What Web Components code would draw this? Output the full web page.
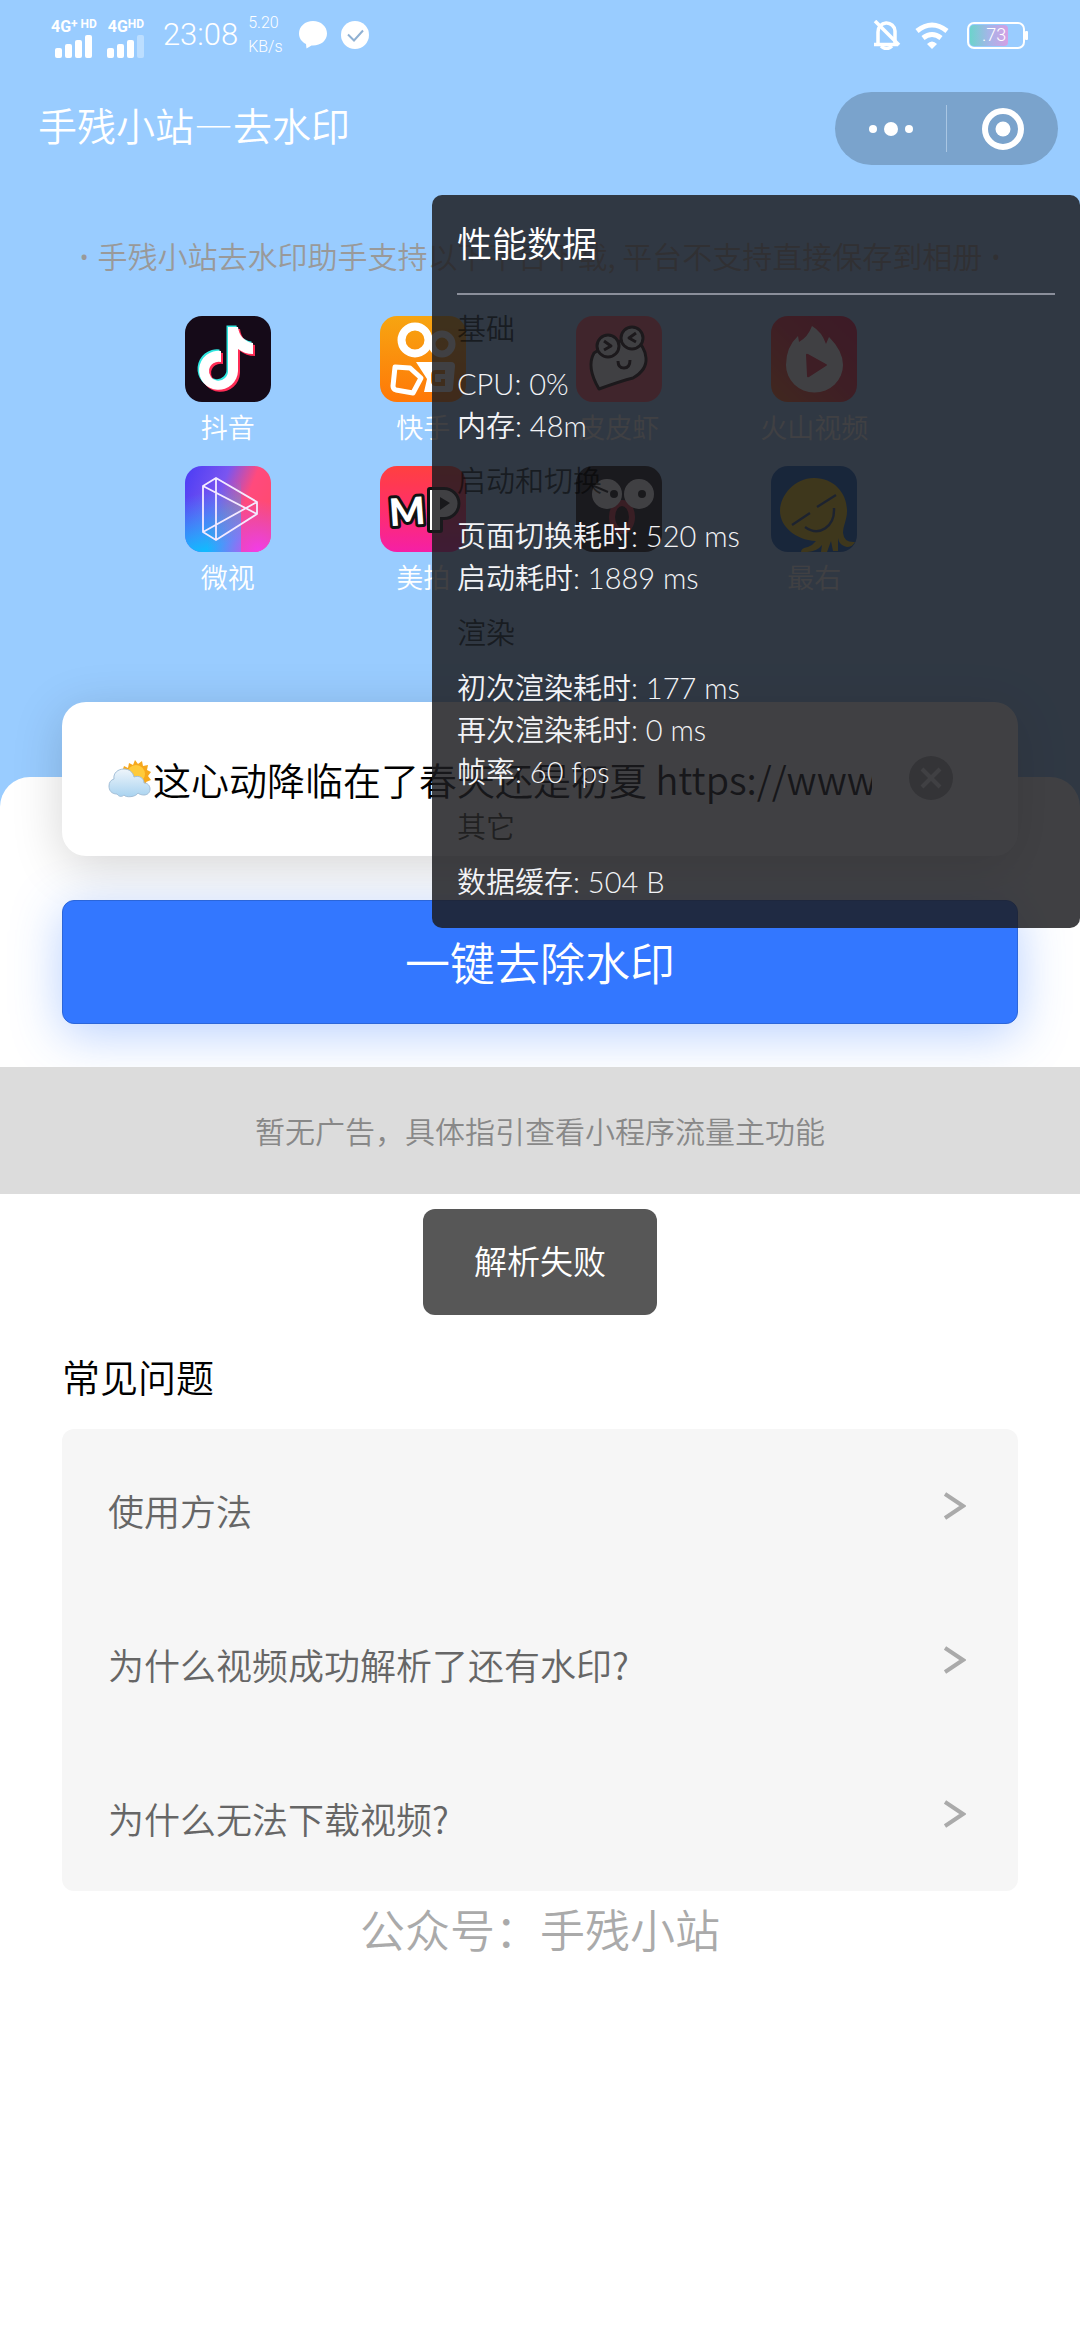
<!DOCTYPE html>
<html lang="zh-CN">
<head>
<meta charset="utf-8">
<meta name="viewport" content="width=device-width, initial-scale=1">
<title>手残小站—去水印</title>
<style>
  html, body { margin: 0; background: #fff; }
  body {
    position: relative;
    min-height: 100vh;
    overflow-x: hidden;
    font-family: "Noto Sans CJK SC", "Noto Sans", sans-serif;
    font-weight: 350;
  }
</style>
</head>
<body>
<watermark-page></watermark-page>

<script>
const define = (name, markup) => {
  const template = document.createElement('template');
  template.innerHTML = markup;
  customElements.define(name, class extends HTMLElement {
    constructor() {
      super();
      this.attachShadow({ mode: 'open' }).append(template.content.cloneNode(true));
    }
  });
};

/* ---------- system status bar ---------- */
define('signal-bars', `
<style>
  :host { display: flex; flex-direction: column; align-items: center; gap: 1px; font: 700 16px/14px Roboto, sans-serif; white-space: nowrap; }
  .label { display: flex; align-items: flex-start; }
  .sup { font-size: 12px; line-height: 9px; }
  svg { display: block; }
  :host([weak]) .last { opacity: .35; }
</style>
<span class="label"><slot></slot><span class="sup"><slot name="sup"></slot></span></span>
<svg width="38" height="23" viewBox="0 0 38 23" fill="#fff" aria-hidden="true">
  <rect x="0" y="13" width="7" height="10" rx="2"/><rect x="10" y="9" width="7" height="14" rx="2"/>
  <rect x="20" y="5" width="7" height="18" rx="2"/><rect class="last" x="30" y="0" width="7" height="23" rx="2"/>
</svg>`);

define('status-bar', `
<style>
  :host { display: flex; align-items: center; height: 70px; padding: 0 51px; color: #fff; box-sizing: border-box; }
  .left, .right { display: flex; align-items: center; }
  .left { flex: 1; gap: 10px; }
  .right { gap: 14px; }
  time { font: 300 31px/36px Roboto, sans-serif; margin-left: 8px; }
  .speed { display: flex; flex-direction: column; font: 300 16px/24px Roboto, sans-serif; }
  .notes { display: flex; gap: 14px; margin-left: 6px; }
  signal-bars { align-self: flex-start; margin-top: 9px; }
  svg { display: block; }
  .battery { font: 300 18px Roboto, sans-serif; margin-left: 4px; }
</style>
<div class="left">
  <signal-bars>4G<span slot="sup">+ HD</span></signal-bars>
  <signal-bars weak>4G<span slot="sup">HD</span></signal-bars>
  <time>23:08</time>
  <div class="speed"><span>5.20</span><span>KB/s</span></div>
  <div class="notes">
    <svg width="28" height="28" viewBox="0 0 28 28" fill="#fff" aria-hidden="true"><path d="M14 0C6 0 0 5.500 0 12.500c0 5 3 8.500 7 10.500l.5 4.500 5-3H14c8 0 14-5 14-12S22 0 14 0z"/></svg>
    <svg width="28" height="28" viewBox="0 0 28 28" aria-hidden="true"><circle cx="14" cy="14" r="14" fill="#fff"/><path d="M7 13.500l6 6 9-10" fill="none" stroke="#8fb0d2" stroke-width="2"/></svg>
  </div>
</div>
<div class="right">
  <svg width="28" height="30" viewBox="0 0 28 30" fill="none" stroke="#fff" stroke-width="3.500" aria-hidden="true">
    <path d="M5 24V12a8.500 8.500 0 0 1 17-1v13"/><path d="M1 24.500h24"/><path d="M8 26q5.500 5 11 0"/><path d="M2 1l24 24"/>
  </svg>
  <svg width="34" height="27" viewBox="0 0 34 27" fill="none" stroke="#fff" stroke-width="5" aria-hidden="true">
    <path d="M2 9Q17-3 32 9"/><path d="M8 16q9-7 18 0"/><path d="M12 22q5-5 10 0l-5 5z" fill="#fff" stroke="none"/>
  </svg>
  <svg class="battery" width="62" height="27" viewBox="0 0 62 27" aria-hidden="true">
    <defs><linearGradient id="charge"><stop offset="0" stop-color="#6cd3cc"/><stop offset=".5" stop-color="#a5b5e8"/><stop offset="1" stop-color="#d59fe4"/></linearGradient></defs>
    <rect x="3" y="3" width="38" height="21" rx="4" fill="url(#charge)"/>
    <rect x="1" y="1" width="56" height="25" rx="6" fill="none" stroke="#fff" stroke-width="2"/>
    <rect x="58" y="9" width="3" height="9" rx="1" fill="#fff"/>
    <text x="15" y="19" fill="#fff">.73</text>
  </svg>
</div>`);

/* ---------- title bar with the capsule menu ---------- */
define('nav-bar', `
<style>
  :host { display: flex; align-items: center; justify-content: space-between; padding: 22px 22px 0 38px; color: #fff; }
  h1 { margin: 0; font-size: 39px; line-height: 60px; font-weight: 350; padding-bottom: 10px; }
  .capsule { display: flex; align-items: center; width: 223px; height: 73px; border-radius: 37px; background: #7aa3cc; }
  button { flex: 1; height: 100%; padding: 0; border: 0; background: none; display: grid; place-items: center; }
  i { width: 1px; height: 47px; background: #a9c6e3; }
</style>
<h1>手残小站—去水印</h1>
<div class="capsule">
  <button aria-label="更多"><svg width="44" height="14" viewBox="0 0 44 14" fill="#fff"><circle cx="4" cy="7" r="4"/><circle cx="22" cy="7" r="7"/><circle cx="40" cy="7" r="4"/></svg></button>
  <i></i>
  <button aria-label="关闭"><svg width="42" height="42" viewBox="0 0 42 42"><circle cx="21" cy="21" r="18" fill="none" stroke="#fff" stroke-width="6"/><circle cx="21" cy="21" r="7.500" fill="#fff"/></svg></button>
</div>`);

/* ---------- supported apps ---------- */
define('app-item', `
<style>
  :host { display: flex; flex-direction: column; align-items: center; gap: 5px; font-size: 27px; line-height: 40px; color: #fff; white-space: nowrap; }
  ::slotted(svg) { display: block; width: 86px; height: 86px; border-radius: 17px; }
</style>
<slot name="icon"></slot><slot></slot>`);

define('app-grid', `
<style>
  :host { display: grid; grid-template-columns: repeat(4, 1fr); row-gap: 19px; padding: 0 168px 0 130px; }
</style>
<app-item><svg slot="icon" viewBox="0 0 86 86"><rect width="86" height="86" fill="#150a18"/>
  <path fill="#2ee6df" transform="translate(-1.500 -1.500)" d="M43 11h10c1 9 7 15 15 16v11c-6 0-11-2-15-5v22a19.500 19.500 0 1 1-17-20v11a9.500 9.500 0 1 0 7 9z"/>
  <path fill="#fe2c55" transform="translate(2 2)" d="M43 11h10c1 9 7 15 15 16v11c-6 0-11-2-15-5v22a19.500 19.500 0 1 1-17-20v11a9.500 9.500 0 1 0 7 9z"/>
  <path fill="#fff" d="M43 11h10c1 9 7 15 15 16v11c-6 0-11-2-15-5v22a19.500 19.500 0 1 1-17-20v11a9.500 9.500 0 1 0 7 9z"/></svg>抖音</app-item>
<app-item><svg slot="icon" viewBox="0 0 86 86"><defs><linearGradient id="ks" x2="0" y2="1"><stop stop-color="#f7a511"/><stop offset="1" stop-color="#ff7808"/></linearGradient></defs><rect width="86" height="86" fill="url(#ks)"/>
  <g fill="none" stroke="#fff"><circle cx="35" cy="24" r="13.500" stroke-width="8"/><circle cx="62" cy="28" r="10" stroke-width="7"/>
  <path d="M15 51l15 1 11 10-8 15-17-3q-3-1-3-4z" stroke-width="5" stroke-linejoin="round"/></g>
  <path fill="#fff" d="M36 46h35q4 0 4 4l-2 22q0 4-4 4H44l3-13z"/><path d="M65 56h-9q-3 0-3 3v6q0 3 3 3h7v-5" fill="none" stroke="#f58a10" stroke-width="4"/></svg>快手</app-item>
<app-item><svg slot="icon" viewBox="0 0 86 86"><rect width="86" height="86" fill="#ff5a70"/>
  <g stroke="#20100f" stroke-width="3" fill="#fff" stroke-linejoin="round"><path d="M18 37q-8 14 5 36 22-8 34-11 14-8 13-20-1-12-12-20L32 28z"/><circle cx="32" cy="30" r="11"/><circle cx="56" cy="22" r="11"/>
  <path fill="none" d="M28 25l7 5-7 4M60 17l-7 5 7 4M42 45q0 7 6 7t6-8"/></g></svg>皮皮虾</app-item>
<app-item><svg slot="icon" viewBox="0 0 86 86"><defs><linearGradient id="hs" x1="0" y1="1" x2="1" y2="0"><stop stop-color="#ff6a22"/><stop offset=".5" stop-color="#f23045"/><stop offset="1" stop-color="#e5154f"/></linearGradient></defs><rect width="86" height="86" fill="url(#hs)"/>
  <path fill="#fff" d="M41 10q10 6 14 18l3-7q14 14 14 28a28 27 0 0 1-57 0q0-18 12-29l1 6q9-5 13-16z"/><path fill="#ee2c45" d="M35 39q0-2 2-1l18 10q2 1 0 2L38 61q-2 1-2-1z"/></svg>火山视频</app-item>
<app-item><svg slot="icon" viewBox="0 0 86 86"><defs><linearGradient id="w1" y2=".4"><stop stop-color="#4a3cf5"/><stop offset=".45" stop-color="#7a55f0"/><stop offset=".75" stop-color="#ff4a7d"/><stop offset="1" stop-color="#ff4a72"/></linearGradient><linearGradient id="w2" x2=".2" y2="1"><stop offset=".35" stop-color="#20b4ff" stop-opacity="0"/><stop offset="1" stop-color="#12b8ff"/></linearGradient><radialGradient id="w3" cx=".85" cy="1" r=".6"><stop stop-color="#f43bea"/><stop offset="1" stop-color="#c84df0" stop-opacity="0"/></radialGradient></defs>
  <rect width="86" height="86" fill="url(#w1)"/><rect width="56" height="86" fill="url(#w2)"/><rect width="86" height="86" fill="url(#w3)"/>
  <path d="M18 20l13-8 41 24v12L31 74l-13-8zM31 12v62M18 20l54 28M18 66l54-30" fill="none" stroke="#f4eaff" stroke-width="1.800" stroke-linejoin="round"/></svg>微视</app-item>
<app-item><svg slot="icon" viewBox="0 0 86 86"><defs><linearGradient id="mp" x2="0" y2="1"><stop stop-color="#ff4040"/><stop offset=".5" stop-color="#ff2f6a"/><stop offset="1" stop-color="#f51fa6"/></linearGradient></defs><rect width="86" height="86" fill="url(#mp)"/>
  <g font-family="Lato" font-weight="900" fill="#fff" stroke="#111" stroke-width="6" stroke-linejoin="round" paint-order="stroke">
    <text x="9" y="59" font-size="38" transform="rotate(-4 26 45)">M</text>
    <path d="M50 24h14a13 13 0 0 1 0 27h-4v13H50z"/>
  </g>
  <path d="M60 31l10 6-10 7z" fill="#111"/></svg>美拍</app-item>
<app-item><svg slot="icon" viewBox="0 0 86 86"><rect width="86" height="86" fill="#17141a"/><ellipse cx="46" cy="51" rx="10" ry="14" fill="#17070b" stroke="#d32b40" stroke-width="6"/><circle cx="31" cy="28" r="15" fill="#fff"/><circle cx="63" cy="28" r="15" fill="#fff"/><circle cx="38" cy="28" r="4" fill="#111"/><circle cx="66" cy="28" r="4" fill="#111"/><path d="M18 20l14 6" stroke="#111" stroke-width="2"/></svg></app-item>
<app-item><svg slot="icon" viewBox="0 0 86 86"><rect width="86" height="86" fill="#0a5cc8"/><path fill="#f2c50e" d="M43 12c20 0 33 15 33 33 0 9-4 14-4 22q1 10 12 9-4 7-11 4-5-2-6-8v13h-5l-2-10-4 11h-6l1-7q-6 8-21 7 0-4 7-5 5-2 8-6C24 74 9 60 9 45s14-33 34-33z"/><path d="M21 59l18-12M46 41l19-12M34 61c14 10 30 0 29-19" fill="none" stroke="#2a4f80" stroke-width="2.500"/></svg>最右</app-item>`);

define('notice-line', `
<style>
  :host { display: block; padding: 69px 0 40px; text-align: center; font-size: 30px; line-height: 42px; color: #999; white-space: nowrap; }
  span { font-family: "Noto Sans", sans-serif; line-height: 0; }
</style>
<span>• </span><slot></slot><span> •</span>`);

/* ---------- link box ---------- */
define('link-box', `
<style>
  :host { display: flex; align-items: center; height: 154px; padding: 0 65px 0 46px; border-radius: 24px; background: #fff; box-shadow: 0 10px 50px rgba(0, 0, 0, .17); box-sizing: border-box; }
  svg { display: block; flex: none; }
  input { flex: 1; min-width: 0; padding: 0; margin: 0 37px 0 2px; border: 0; outline: 0; background: none; font: inherit; font-size: 38px; line-height: 60px; height: 60px; color: #000; }
  button { padding: 0 0 2px; border: 0; background: none; }
</style>
<svg width="43" height="38" viewBox="0 0 43 38" aria-hidden="true">
  <defs><linearGradient id="cl" x2="0" y2="1"><stop stop-color="#eef5fb"/><stop offset="1" stop-color="#a9d3f0"/></linearGradient></defs>
  <path fill="#f6a81c" d="M27 0l3 4 4-3 1 5 5-1-1 5 4 2-3 4 3 4-5 2 1 5-5-1-10 0-10-14 2-6 4 2 1-5 4 2z"/>
  <circle cx="28" cy="14" r="9" fill="#ffca3a"/>
  <path fill="url(#cl)" stroke="#a3bfd8" stroke-width="1" d="M9 34C3 34 1 30 1 26c0-4 2-6 5-7C5 13 10 9 16 9c5 0 9 3 10 8 5-2 10 1 10 6 4 0 6 3 6 6 0 4-3 6-6 6-3 0-5-1-6-2-2 4-12 5-14 2-2 2-5 2-7-1z"/>
</svg>
<input type="text" aria-label="视频链接" value="这心动降临在了春天还是初夏 https://www.iesdouyin.com/">
<button aria-label="清空"><svg width="44" height="44" viewBox="0 0 44 44"><circle cx="22" cy="22" r="22" fill="#b2b2b2"/><path d="M13 13l18 18M31 13L13 31" stroke="#fff" stroke-width="4"/></svg></button>`);

define('primary-button', `
<style>
  :host { display: block; }
  button { display: block; width: 100%; height: 124px; padding: 0 0 2px; border: 1px solid #2c66d9; border-radius: 12px; background: #3377ff; color: #fff; font: inherit; font-size: 45px; box-shadow: 0 10px 50px rgba(51, 119, 255, .35); }
</style>
<button><slot></slot></button>`);

define('ad-banner', `
<style>
  :host { display: block; position: relative; padding: 42px 0 43px; background: #dcdcdc; color: #888; text-align: center; font-size: 30px; line-height: 42px; }
</style>
<slot></slot>`);

define('toast-tip', `
<style>
  :host { display: block; padding: 27px 51px 31px; border-radius: 12px; background: #575757; color: #fff; font-size: 33px; line-height: 48px; white-space: nowrap; }
</style>
<slot></slot>`);

/* ---------- questions ---------- */
define('faq-item', `
<style>
  :host { display: block; }
  button { display: flex; align-items: center; justify-content: space-between; width: 100%; height: 154px; padding: 0 52px 0 46px; border: 0; background: none; color: #666; font: inherit; font-size: 36px; line-height: 50px; text-align: left; }
  span { padding-top: 8px; }
</style>
<button><span><slot></slot></span>
<svg width="22" height="28" viewBox="0 0 22 28" fill="none" stroke="#aaa" stroke-width="4" aria-hidden="true"><path d="M1 2l18 12L1 26"/></svg></button>`);

define('faq-list', `
<style>
  :host { display: block; }
  h2 { margin: 0 0 26px; font-size: 38px; line-height: 54px; font-weight: 350; color: #000; }
  .rows { border-radius: 12px; background: #f6f6f6; }
</style>
<h2>常见问题</h2>
<div class="rows"><slot></slot></div>`);

/* ---------- performance overlay ---------- */
define('perf-group', `
<style>
  :host { display: block; font-size: 29px; line-height: 42px; }
  h3 { margin: 0 0 13px; font: inherit; color: rgba(0, 0, 0, .5); }
  .items { display: flex; flex-direction: column; color: #f2f3f6; }
</style>
<h3><slot name="title"></slot></h3>
<div class="items"><slot></slot></div>`);

define('perf-panel', `
<style>
  :host { display: flex; flex-direction: column; gap: 13px; padding: 20px 25px 25px; border-radius: 10px; background: rgba(28, 28, 31, .84); box-sizing: border-box; font-family: Lato, "Noto Sans CJK SC", sans-serif; font-weight: 350; white-space: nowrap; }
  h2 { margin: 0; padding-bottom: 22px; border-bottom: 2px solid #8b8f9b; color: #fff; font-size: 35px; line-height: 56px; font-weight: 350; }
</style>
<h2>性能数据</h2>
<perf-group><span slot="title">基础</span><span>CPU: 0%</span><span>内存: 48m</span></perf-group>
<perf-group><span slot="title">启动和切换</span><span>页面切换耗时: 520 ms</span><span>启动耗时: 1889 ms</span></perf-group>
<perf-group><span slot="title">渲染</span><span>初次渲染耗时: 177 ms</span><span>再次渲染耗时: 0 ms</span><span>帧率: 60 fps</span></perf-group>
<perf-group><span slot="title">其它</span><span>数据缓存: 504 B</span></perf-group>`);

define('watermark-page', `
<style>
  :host { display: block; }
  header { background: #99ccff; padding-bottom: 210px; }
  main { margin-top: -30px; border-radius: 30px 30px 0 0; background: #fff; }
  .form { display: flex; flex-direction: column; gap: 44px; padding: 0 62px 43px; }
  link-box { margin-top: -75px; }
  .gap { position: relative; }
  toast-tip { position: absolute; top: 15px; left: 50%; transform: translateX(-50%); }
  faq-list { padding: 155px 62px 0; }
  footer { color: #aaa; text-align: center; font-size: 45px; line-height: 76px; }
  perf-panel { position: absolute; top: 195px; right: 0; width: 60%; }
</style>
<header>
  <status-bar></status-bar>
  <nav-bar></nav-bar>
  <notice-line>手残小站去水印助手支持以下平台下载, 平台不支持直接保存到相册</notice-line>
  <app-grid></app-grid>
</header>
<main>
  <div class="form">
    <link-box></link-box>
    <primary-button>一键去除水印</primary-button>
  </div>
  <ad-banner>暂无广告，具体指引查看小程序流量主功能</ad-banner>
  <div class="gap">
    <toast-tip role="status">解析失败</toast-tip>
    <faq-list>
      <faq-item>使用方法</faq-item>
      <faq-item>为什么视频成功解析了还有水印?</faq-item>
      <faq-item>为什么无法下载视频?</faq-item>
    </faq-list>
  </div>
</main>
<footer>公众号：手残小站</footer>
<perf-panel></perf-panel>`);
</script>
</body>
</html>
